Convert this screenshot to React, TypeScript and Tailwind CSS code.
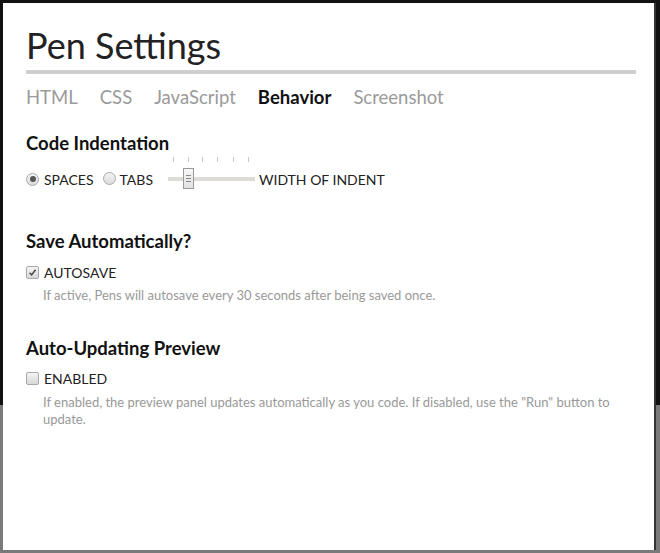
import React from 'react';

const font = { fontFamily: 'Lato, "Open Sans", sans-serif' };

function Radio({ checked }: { checked?: boolean }) {
  return (
    <span className="inline-flex h-[13px] w-[13px] items-center justify-center rounded-full border border-[#a9a9a9] bg-gradient-to-b from-[#f4f4f4] to-[#dcdcdc]">
      {checked && <span className="h-[6px] w-[6px] rounded-full bg-[#555]" />}
    </span>
  );
}

function Checkbox({ checked }: { checked?: boolean }) {
  return (
    <span className="inline-flex h-[13px] w-[13px] items-center justify-center rounded-[2px] border border-[#a9a9a9] bg-gradient-to-b from-[#f4f4f4] to-[#d8d8d8]">
      {checked && (
        <svg width="9" height="9" viewBox="0 0 10 10">
          <path d="M1.8 5.4 L4 7.6 L8.4 2" fill="none" stroke="#444" strokeWidth="1.6" />
        </svg>
      )}
    </span>
  );
}

function Slider() {
  const ticks = [5, 20, 34, 49, 65, 80];
  return (
    <div className="relative ml-[15px] h-[32px] w-[87px]">
      <div className="absolute left-0 right-0 top-[-6px] h-[6px]">
        {ticks.map((t) => (
          <span key={t} className="absolute top-0 h-[5px] w-px bg-[#c8c8c8]" style={{ left: t }} />
        ))}
      </div>
      <div className="absolute left-0 right-0 top-[14px] h-[4px] bg-[#dedbd6]" />
      <div className="absolute left-[15px] top-[5px] flex h-[21px] w-[11px] flex-col items-center justify-center gap-[2px] border border-[#9a9a9a] bg-gradient-to-b from-[#f7f7f7] to-[#e2e2e2]">
        <span className="h-px w-[5px] bg-[#888]" />
        <span className="h-px w-[5px] bg-[#888]" />
        <span className="h-px w-[5px] bg-[#888]" />
      </div>
    </div>
  );
}

export default function App() {
  return (
    <div className="relative h-[553px] w-[660px] overflow-hidden" style={font}>
      <div className="flex h-full flex-col">
        <div className="h-[405px] bg-[#111]" />
        <div className="flex-1 bg-[#7a7a7a]" />
      </div>

      <div className="absolute left-[3px] top-[3px] h-[547px] w-[653px] border-r-2 border-[#333] bg-white pl-[23px] pr-[20px] text-[#111]">
        <h1 className="pt-[20px] text-[36px] leading-[44px] text-[#222]">Pen Settings</h1>
        <div className="mt-[3px] h-[4px] w-[610px] bg-[#cfcfcf]" />

        <nav className="mt-[11px] flex gap-[22px] text-[18.5px] leading-[24px] text-[#9a9a9a]">
          <span>HTML</span>
          <span>CSS</span>
          <span>JavaScript</span>
          <span className="font-bold text-[#111]">Behavior</span>
          <span>Screenshot</span>
        </nav>

        <section className="mt-[22px]">
          <h2 className="text-[18.5px] font-bold leading-[24px]">Code Indentation</h2>
          <div className="mt-[8px] flex items-center text-[14px] uppercase text-[#222]">
            <Radio checked />
            <span className="ml-[5px]">Spaces</span>
            <span className="ml-[9px]"><Radio /></span>
            <span className="ml-[4px]">Tabs</span>
            <Slider />
            <span className="ml-[4px]">Width of Indent</span>
          </div>
        </section>

        <section className="mt-[34px]">
          <h2 className="text-[18.5px] font-bold leading-[24px]">Save Automatically?</h2>
          <div className="mt-[9px] flex items-center gap-[5px] text-[14px] text-[#222]">
            <Checkbox checked />
            <span>AUTOSAVE</span>
          </div>
          <p className="ml-[17px] mt-[4px] text-[13px] leading-[17px] text-[#999]">
            If active, Pens will autosave every 30 seconds after being saved once.
          </p>
        </section>

        <section className="mt-[32px]">
          <h2 className="text-[18.5px] font-bold leading-[24px]">Auto-Updating Preview</h2>
          <div className="mt-[8px] flex items-center gap-[5px] text-[14px] text-[#222]">
            <Checkbox />
            <span>ENABLED</span>
          </div>
          <p className="ml-[17px] mt-[5px] w-[580px] text-[13px] leading-[17px] text-[#999]">
            If enabled, the preview panel updates automatically as you code. If disabled, use the "Run" button to update.
          </p>
        </section>
      </div>
    </div>
  );
}
